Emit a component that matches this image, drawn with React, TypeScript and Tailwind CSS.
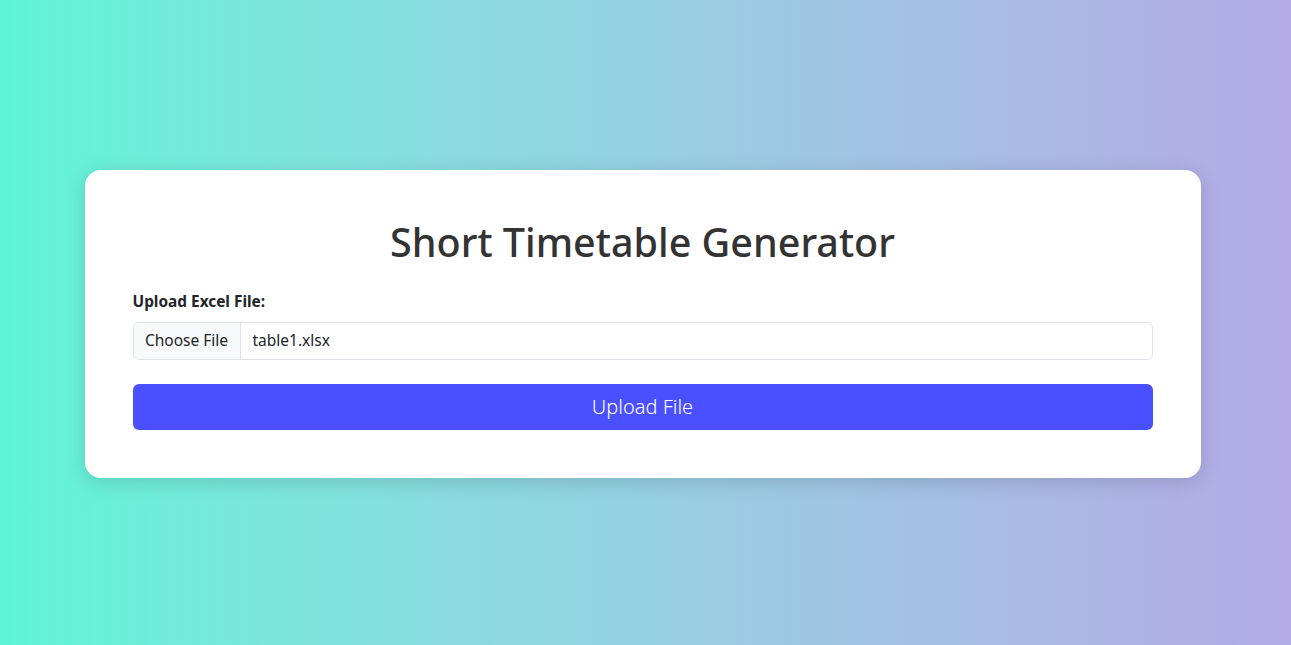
import React from "react";

export default function App() {
  return (
    <div
      className="w-full h-[645px] flex items-center justify-center pr-[6px] pt-[2px] bg-gradient-to-r from-[#5ef5da] to-[#b3aae7]"
      style={{ fontFamily: '"Noto Sans", "Open Sans", sans-serif' }}
    >
      <div className="w-[1116px] bg-white rounded-[16px] p-12 shadow-[0_4px_20px_rgba(0,0,0,0.15)]">
        <h1 className="text-center text-[39.5px] leading-[48px] font-medium text-[#333333] mb-6">
          Short Timetable Generator
        </h1>
        <label className="block text-[15.4px] leading-6 font-bold text-[#212529] mb-2">
          Upload Excel File:
        </label>
        <div className="flex h-[38px] border border-[#dee2e6] rounded-[6px] overflow-hidden text-[15.5px] text-[#212529]">
          <div className="w-[107px] flex items-center justify-center bg-[#f8f9fa] border-r border-[#dee2e6]">
            Choose File
          </div>
          <div className="flex items-center pl-3">table1.xlsx</div>
        </div>
        <button className="mt-6 w-full h-[46px] rounded-[6px] bg-[#4a50ff] text-white text-[20px] font-light">
          Upload File
        </button>
      </div>
    </div>
  );
}
